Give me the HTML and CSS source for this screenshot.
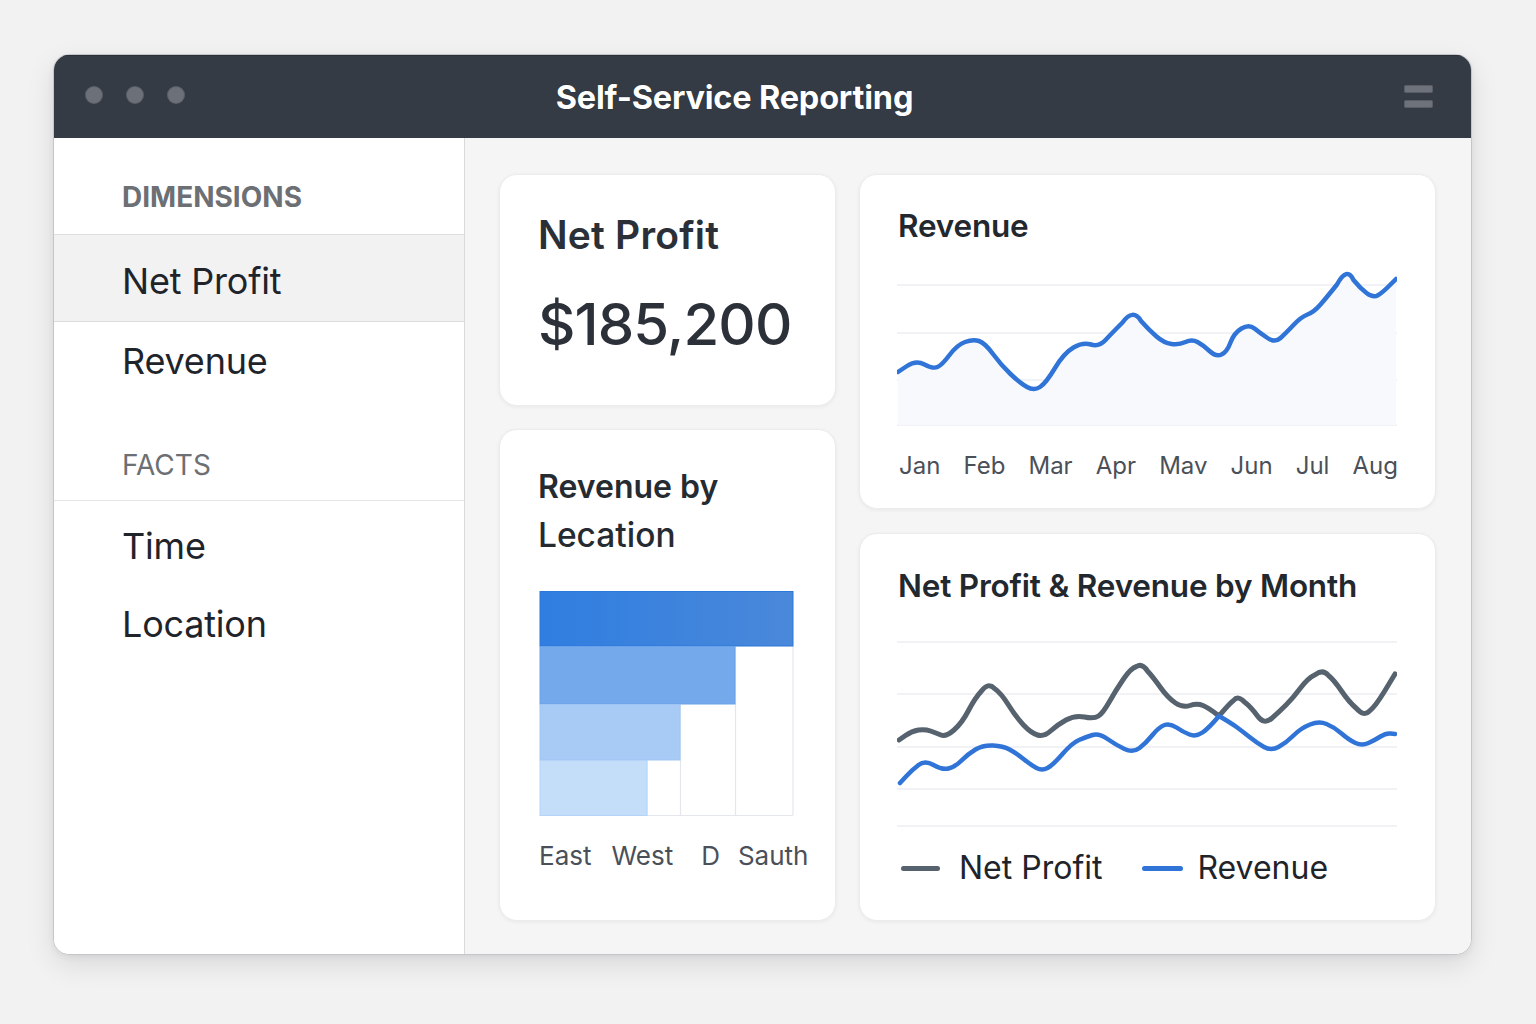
FILE: index.html
```html
<!DOCTYPE html>
<html lang="en">
<head>
<meta charset="utf-8">
<title>Self-Service Reporting</title>
<link rel="stylesheet" href="styles.css">
</head>
<body>
<div class="window">
  <header class="titlebar">
    <div class="lights"><span class="light"></span><span class="light"></span><span class="light"></span></div>
    <h1 class="app-title">Self-Service Reporting</h1>
    <div class="menu-icon"><span></span><span></span></div>
  </header>
  <div class="body">
    <aside class="sidebar">
      <div class="side-head side-head-dim">DIMENSIONS</div>
      <div class="side-item active">Net Profit</div>
      <div class="side-item">Revenue</div>
      <div class="side-head side-head-facts">FACTS</div>
      <div class="side-list">
        <div class="side-item">Time</div>
        <div class="side-item">Location</div>
      </div>
    </aside>
    <main class="main">
      <div class="col col-left">
        <section class="card card-kpi">
          <h2 class="kpi-title">Net Profit</h2>
          <div class="kpi-value">$185,200</div>
        </section>
        <section class="card card-loc">
          <h2 class="loc-title">Revenue by<br><span class="loc-title-2">Lecation</span></h2>
          <svg class="bars" width="256" height="230" viewBox="539 588 256 230">
            <defs>
              <linearGradient id="g1" x1="0" y1="0" x2="1" y2="0">
                <stop offset="0" stop-color="#2f7ee0"/>
                <stop offset="1" stop-color="#4a88da"/>
              </linearGradient>
            </defs>
            <g stroke="#e3e6eb" stroke-width="1.2" fill="none">
              <line x1="647" y1="759" x2="647" y2="814"/>
              <line x1="680.5" y1="703" x2="680.5" y2="814"/>
              <line x1="735.5" y1="645" x2="735.5" y2="814"/>
              <line x1="793" y1="645" x2="793" y2="814"/>
              <line x1="540" y1="814.5" x2="793" y2="814.5"/>
            </g>
            <rect x="540" y="590.5" width="253" height="54.5" fill="url(#g1)" stroke="#2b77da" stroke-width="1"/>
            <rect x="540" y="645.5" width="195" height="57.5" fill="#74a9ec" stroke="#6aa2ea" stroke-width="1"/>
            <rect x="540" y="703.5" width="140" height="55.5" fill="#a8cbf6" stroke="#9ec5f4" stroke-width="1"/>
            <rect x="540" y="759.5" width="107" height="55" fill="#c4defa" stroke="#b3d4f8" stroke-width="1"/>
          </svg>
          <div class="loc-labels"><span>East</span><span>West</span><span class="lbl-d">D</span><span>Sauth</span></div>
        </section>
      </div>
      <div class="col col-right">
        <section class="card card-rev">
          <h2 class="chart-title">Revenue</h2>
          <svg class="chart chart-rev" width="500" height="168" viewBox="898 262 500 168">
            <g stroke="#e2e5ee" stroke-width="1.2">
              <line x1="898" y1="285" x2="1398" y2="285"/>
              <line x1="898" y1="333" x2="1398" y2="333"/>
              <line x1="898" y1="380" x2="1398" y2="380"/>
              <line x1="898" y1="425" x2="1398" y2="425"/>
            </g>
            <path fill="#f8f9fd" d="M899,372 L908,366 Q917,360 925.5,364.5 Q934,369 938.5,367 Q943,365 950.5,355 Q958,345 966,342 Q974,339 980,341 Q986,343 994,354 Q1002,365 1011.5,374 Q1021,383 1028,387 Q1035,391 1041,387 Q1047,383 1056,368 Q1065,353 1074.5,347.5 Q1084,342 1092,344.5 Q1100,347 1106.5,340 Q1113,333 1123.5,322.5 Q1134,308 1142,321 Q1150,330 1157.5,336.5 Q1165,343 1172.5,344 Q1180,345 1186.5,342 Q1193,339 1198.5,342 Q1204,345 1210.5,351 Q1217,357 1222.5,354.5 Q1228,352 1231.5,342.5 Q1235,333 1242.5,328.5 Q1250,324 1255.5,328.5 Q1261,333 1268.5,338 Q1276,343 1281.5,338 Q1287,333 1294.5,325 Q1302,317 1308.5,314.5 Q1315,312 1321.5,304.5 Q1328,297 1338,284.5 Q1348,266 1354.5,280 Q1361,288 1367.5,293 Q1374,298 1378.5,295.5 Q1383,293 1390,286 L1397,279 L1397,425 L899,425 Z"/>
            <path fill="none" stroke="#2f74d6" stroke-width="4.5" stroke-linecap="round" stroke-linejoin="round" d="M899,372 L908,366 Q917,360 925.5,364.5 Q934,369 938.5,367 Q943,365 950.5,355 Q958,345 966,342 Q974,339 980,341 Q986,343 994,354 Q1002,365 1011.5,374 Q1021,383 1028,387 Q1035,391 1041,387 Q1047,383 1056,368 Q1065,353 1074.5,347.5 Q1084,342 1092,344.5 Q1100,347 1106.5,340 Q1113,333 1123.5,322.5 Q1134,308 1142,321 Q1150,330 1157.5,336.5 Q1165,343 1172.5,344 Q1180,345 1186.5,342 Q1193,339 1198.5,342 Q1204,345 1210.5,351 Q1217,357 1222.5,354.5 Q1228,352 1231.5,342.5 Q1235,333 1242.5,328.5 Q1250,324 1255.5,328.5 Q1261,333 1268.5,338 Q1276,343 1281.5,338 Q1287,333 1294.5,325 Q1302,317 1308.5,314.5 Q1315,312 1321.5,304.5 Q1328,297 1338,284.5 Q1348,266 1354.5,280 Q1361,288 1367.5,293 Q1374,298 1378.5,295.5 Q1383,293 1390,286 L1397,279"/>
          </svg>
          <div class="months"><span>Jan</span><span>Feb</span><span>Mar</span><span>Apr</span><span>Mav</span><span>Jun</span><span>Jul</span><span>Aug</span></div>
        </section>
        <section class="card card-combo">
          <h2 class="chart-title">Net Profit &amp; Revenue by Month</h2>
          <svg class="chart chart-combo" width="500" height="200" viewBox="898 632 500 200">
            <g stroke="#e2e5ee" stroke-width="1.2">
              <line x1="898" y1="642" x2="1398" y2="642"/>
              <line x1="898" y1="694" x2="1398" y2="694"/>
              <line x1="898" y1="747" x2="1398" y2="747"/>
              <line x1="898" y1="789" x2="1398" y2="789"/>
              <line x1="898" y1="826" x2="1398" y2="826"/>
            </g>
            <path fill="none" stroke="#56626e" stroke-width="5" stroke-linecap="round" stroke-linejoin="round" d="M900,740 L906.5,735.5 Q913,731 919.5,730 Q926,729 931.5,731 Q937,733 942,735 Q947,737 955,730 Q963,723 969.5,710.5 Q976,698 982.5,691 Q989,682 995.5,688.5 Q1002,693 1009.5,705 Q1017,717 1024.5,725 Q1032,733 1038.5,735 Q1045,737 1051.5,731 Q1058,725 1067,720 Q1076,715 1085.5,717 Q1095,719 1099.5,716 Q1104,713 1110.5,701.5 Q1117,690 1124.5,679 Q1132,668 1137.5,666.5 Q1143,663 1148.5,671 Q1154,677 1161.5,687.5 Q1169,698 1176.5,703 Q1184,708 1191,705.5 Q1198,703 1204,705.5 Q1210,708 1220,716 Q1230,704 1234.5,700.5 Q1239,695 1245.5,702 Q1252,707 1258.5,716 Q1265,725 1272.5,718.5 Q1280,712 1287,705 Q1294,698 1301.5,688 Q1309,678 1316.5,674.5 Q1324,669 1329.5,675.5 Q1335,680 1342.5,691 Q1350,702 1357.5,708.5 Q1365,717 1370.5,711 Q1376,707 1386,690.5 L1396,674"/>
            <path fill="none" stroke="#2f74d6" stroke-width="4.5" stroke-linecap="round" stroke-linejoin="round" d="M901,783 L907,776.5 Q913,770 919.5,765 Q926,760 934.5,765 Q943,770 949.5,768.5 Q956,767 962.5,760.5 Q969,754 976.5,749.5 Q984,745 994,745.5 Q1004,746 1010.5,749.5 Q1017,753 1024.5,759 Q1032,765 1037.5,768 Q1043,771 1048.5,768 Q1054,765 1063.5,754 Q1073,743 1080,740 Q1087,737 1093.5,735 Q1100,733 1108.5,739 Q1117,745 1125.5,749 Q1134,753 1140.5,748 Q1147,743 1153.5,735 Q1160,727 1165.5,725 Q1171,723 1177.5,727.5 Q1184,732 1190.5,734.5 Q1197,737 1203.5,732.5 Q1210,728 1220,716 Q1232,723 1237.5,727 Q1243,731 1250.5,737 Q1258,743 1265,747 Q1272,751 1279.5,747 Q1287,743 1294.5,735.5 Q1302,728 1311,724.5 Q1320,721 1327.5,724 Q1335,727 1342.5,733.5 Q1350,740 1356.5,743 Q1363,746 1369.5,743 Q1376,740 1381.5,736.5 Q1387,733 1391.5,733.5 L1396,734"/>
          </svg>
          <div class="legend">
            <span class="legend-item"><i class="swatch swatch-gray"></i>Net Profit</span>
            <span class="legend-item"><i class="swatch swatch-blue"></i>Revenue</span>
          </div>
        </section>
      </div>
    </main>
  </div>
</div>
</body>
</html>
```
FILE: styles.css
```css
* { box-sizing: border-box; }
html, body { margin: 0; padding: 0; }
body {
  background: #f2f2f2;
  font-family: Inter, "Noto Sans", "Liberation Sans", sans-serif;
  color: #23282f;
  width: 1536px;
  height: 1024px;
  overflow: hidden;
}
.window {
  width: 1419px;
  height: 901px;
  margin: 54px 0 0 53px;
  border: 1px solid #c4c6c9;
  border-radius: 16px;
  overflow: hidden;
  background: #fff;
  display: flex;
  flex-direction: column;
  box-shadow: 0 10px 28px rgba(0,0,0,0.10), 0 2px 6px rgba(0,0,0,0.06);
}
.titlebar {
  height: 83px;
  flex: none;
  background: #353b45;
  border-top: 1px solid #2a2f37;
  display: flex;
  align-items: center;
  padding: 0 38px 0 31px;
}
.lights { display: flex; gap: 23px; width: 160px; margin-bottom: 4px; }
.light {
  width: 18px; height: 18px; border-radius: 50%;
  background: #6b7079;
  box-shadow: inset 0 0 0 1px rgba(0,0,0,0.15);
}
.app-title {
  flex: 1;
  margin: 0;
  padding-right: 180px;
  text-align: center;
  color: #fff;
  font-size: 32.5px;
  font-weight: 700;
  letter-spacing: -0.2px;
  text-shadow: 0 0 1px rgba(0,0,0,0.6);
}
.menu-icon { display: flex; flex-direction: column; gap: 7px; width: 29px; margin-bottom: 2px; }
.menu-icon span {
  display: block; height: 8px; border-radius: 2px;
  background: #6e737b;
  box-shadow: inset 0 0 0 1px rgba(0,0,0,0.18);
}
.body { flex: 1; display: flex; min-height: 0; }
.sidebar {
  width: 411px;
  flex: none;
  border-right: 1px solid #d9d9db;
  background: #fff;
}
.side-head {
  padding-left: 68px;
  font-size: 28px;
  line-height: 40px;
  color: #6c6f74;
}
.side-head-dim {
  font-weight: 700;
  padding-top: 39px;
  padding-bottom: 17px;
  border-bottom: 1px solid #dedfe1;
}
.side-head-facts {
  font-weight: 400;
  padding-top: 45px;
  padding-bottom: 15px;
  border-bottom: 1px solid #e4e5e7;
}
.side-item {
  padding-left: 68px;
  font-size: 36px;
  line-height: 78px;
  color: #1f242b;
  letter-spacing: -0.2px;
}
.side-item.active {
  background: #f2f2f2;
  border-bottom: 1px solid #dcdcde;
  padding-top: 7px;
  padding-bottom: 1px;
}
.side-list { padding-top: 6px; }
.main {
  flex: 1;
  background: #f5f5f6;
  display: flex;
  gap: 23px;
  padding: 36px 34px 0 34px;
}
.col { display: flex; flex-direction: column; }
.col-left { width: 337px; gap: 23px; }
.col-right { width: 577px; gap: 24px; }
.card {
  background: #fff;
  border-radius: 18px;
  border: 1px solid #ececee;
  box-shadow: 0 1px 4px rgba(0,0,0,0.06);
}
.card-kpi { height: 232px; padding: 37px 0 0 38px; }
.kpi-title {
  margin: 0;
  font-size: 39px;
  line-height: 46px;
  font-weight: 600;
  color: #2b3038;
  letter-spacing: 0.2px;
}
.kpi-value {
  margin-top: 31px;
  font-size: 58px;
  line-height: 70px;
  font-weight: 500;
  color: #2c3139;
  letter-spacing: -0.9px;
}
.card-loc { height: 492px; padding: 33px 0 0 38px; }
.loc-title {
  margin: 0;
  font-size: 32px;
  line-height: 48px;
  font-weight: 600;
  color: #262b32;
}
.loc-title-2 { font-size: 33.5px; font-weight: 500; }
.bars { display: block; margin-top: 29px; margin-left: 1px; }
.loc-labels {
  margin-top: 22px;
  display: flex;
  font-size: 26px;
  line-height: 30px;
  color: #4b5058;
  padding-left: 1px;
}
.loc-labels span:nth-child(2) { margin-left: 20px; }
.loc-labels span:nth-child(3) { margin-left: 28px; }
.loc-labels span:nth-child(4) { margin-left: 18px; }
.card-rev { height: 335px; padding: 31px 0 0 38px; }
.card-combo { height: 388px; padding: 32px 0 0 38px; }
.chart-title {
  margin: 0;
  font-size: 31.5px;
  line-height: 40px;
  font-weight: 600;
  color: #23282f;
  letter-spacing: -0.2px;
}
.chart { display: block; margin-left: -1px; }
.chart-rev { margin-top: 16px; }
.chart-combo { margin-top: 26px; }
.months {
  width: 500px;
  margin-top: 21px;
  display: flex;
  justify-content: space-between;
  font-size: 24px;
  line-height: 30px;
  color: #4b5058;
  padding: 0 0 0 1px;
}
.legend {
  margin-top: 18px;
  display: flex;
  gap: 40px;
  font-size: 32px;
  line-height: 36px;
  color: #1f242b;
  padding-left: 3px;
}
.legend-item { display: flex; align-items: center; }
.swatch {
  display: inline-block;
  width: 39px; height: 5px; border-radius: 3px;
  margin-right: 19px;
}
.swatch-gray { background: #56626e; }
.swatch-blue { background: #2f74d6; width: 41px; margin-right: 14px; }
```
